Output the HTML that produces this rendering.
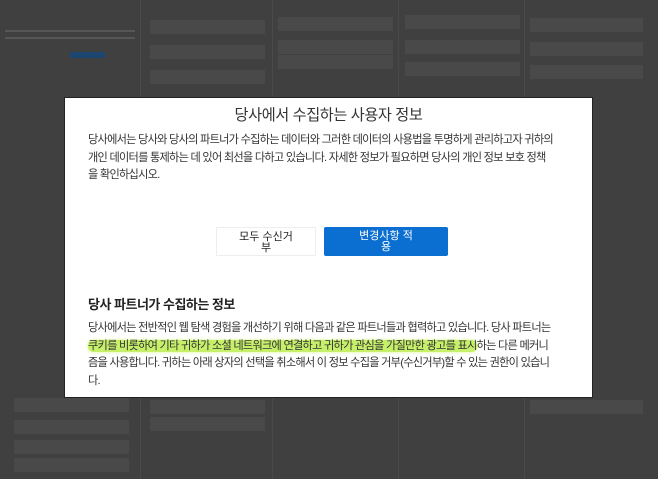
<!DOCTYPE html>
<html><head><meta charset="utf-8"><style>
body{margin:0;width:658px;height:479px;background:#404040;overflow:hidden;position:relative;font-family:"Liberation Sans","Noto Sans CJK KR",sans-serif}
.col{position:absolute;top:0;height:479px;border-left:1px solid #4a4a4a}
.b{position:absolute;background:#494949;height:14px}
.l{position:absolute;background:#565656;height:2px}
.modal{position:absolute;left:64px;top:97px;width:529px;height:301px;background:#fff;border:1px solid #222;box-sizing:border-box;color:#222}
.t{position:absolute;left:0;width:100%;top:5px;text-align:center;font-size:15.2px;letter-spacing:-0.4px;color:#333}
.p{position:absolute;left:23px;width:500px;font-size:11.2px;line-height:17.6px;letter-spacing:-0.75px;color:#333;white-space:nowrap}
.btn{position:absolute;top:129px;height:29px;font-size:11px;line-height:11px;text-align:center;box-sizing:border-box;padding-top:4px}
h3{position:absolute;left:23px;top:196px;margin:0;font-size:13px;letter-spacing:-0.5px;color:#222}
.hl{background:#c7f06a;border-radius:5px;box-shadow:0 0 3px #d6f58a}
</style></head><body>
<div class="col" style="left:140px"></div><div class="col" style="left:272px"></div><div class="col" style="left:398px"></div><div class="col" style="left:524px"></div>
<div class="b" style="left:150px;top:20px;width:115px"></div><div class="b" style="left:150px;top:45px;width:115px"></div><div class="b" style="left:150px;top:70px;width:115px"></div>
<div class="b" style="left:278px;top:17px;width:115px"></div><div class="b" style="left:278px;top:40px;width:115px"></div><div class="b" style="left:278px;top:55px;width:115px"></div>
<div class="b" style="left:405px;top:15px;width:115px"></div><div class="b" style="left:405px;top:40px;width:115px"></div><div class="b" style="left:405px;top:62px;width:115px"></div>
<div class="b" style="left:530px;top:18px;width:113px"></div><div class="b" style="left:530px;top:42px;width:113px"></div><div class="b" style="left:530px;top:65px;width:113px"></div>
<div class="b" style="left:14px;top:398px;width:115px"></div><div class="b" style="left:14px;top:420px;width:115px"></div><div class="b" style="left:14px;top:440px;width:115px"></div><div class="b" style="left:14px;top:458px;width:115px"></div>
<div class="b" style="left:150px;top:400px;width:115px"></div><div class="b" style="left:150px;top:417px;width:115px"></div>
<div class="b" style="left:530px;top:400px;width:113px"></div>
<div class="l" style="left:5px;top:30px;width:130px"></div><div class="l" style="left:5px;top:37px;width:130px"></div><div class="l" style="left:70px;top:52px;width:35px;background:#1c4670;height:6px"></div>
<div class="modal">
<div class="t">당사에서 수집하는 사용자 정보</div>
<div class="p" style="top:34px">당사에서는 당사와 당사의 파트너가 수집하는 데이터와 그러한 데이터의 사용법을 투명하게 관리하고자 귀하의<br>개인 데이터를 통제하는 데 있어 최선을 다하고 있습니다. 자세한 정보가 필요하면 당사의 개인 정보 보호 정책<br>을 확인하십시오.</div>
<div class="btn" style="left:151px;width:100px;background:#fff;border:1px solid #eee;color:#222">모두 수신거<br>부</div>
<div class="btn" style="left:259px;width:124px;background:#0b6ed1;border-radius:2px;color:#fff">변경사항 적<br>용</div>
<h3>당사 파트너가 수집하는 정보</h3>
<div class="p" style="top:222px">당사에서는 전반적인 웹 탐색 경험을 개선하기 위해 다음과 같은 파트너들과 협력하고 있습니다. 당사 파트너는<br><span class="hl">쿠키를 비롯하여 기타 귀하가 소셜 네트워크에 연결하고 귀하가 관심을 가질만한 광고를 표시</span>하는 다른 메커니<br>즘을 사용합니다. 귀하는 아래 상자의 선택을 취소해서 이 정보 수집을 거부(수신거부)할 수 있는 권한이 있습니<br>다.</div>
</div>
</body></html>
